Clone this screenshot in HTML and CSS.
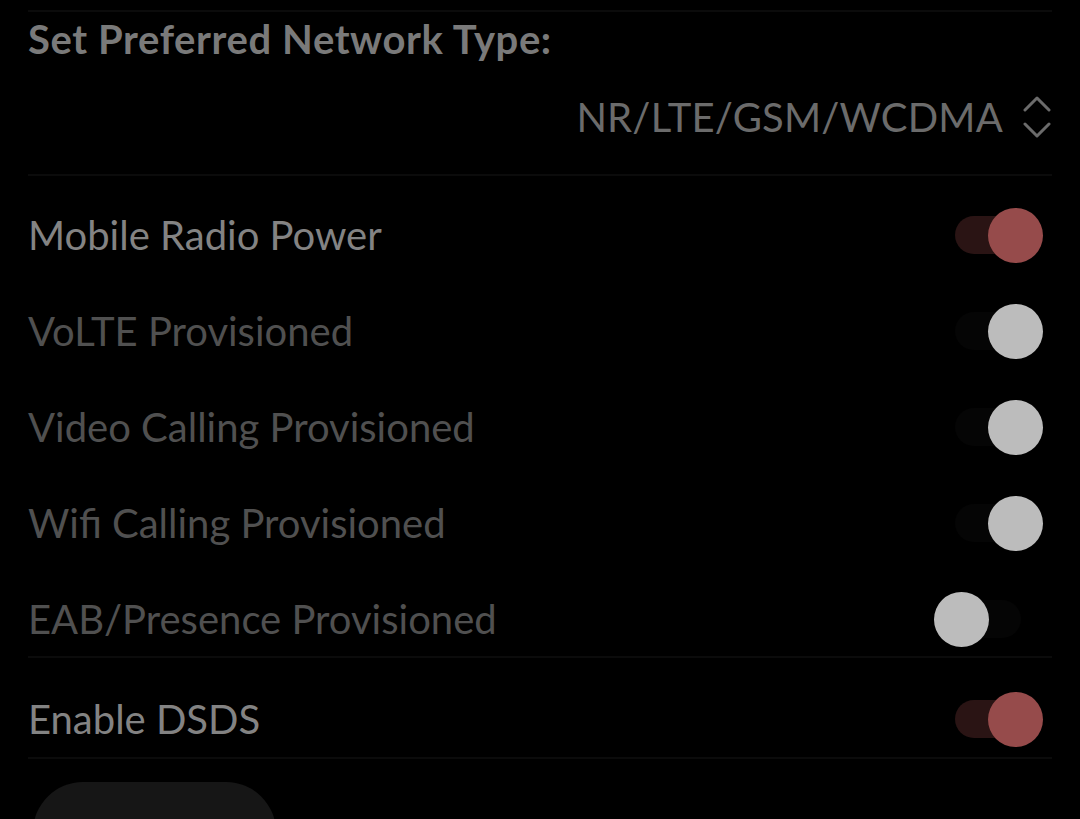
FILE: index.html
```html
<!DOCTYPE html>
<html lang="en">
<head>
<meta charset="UTF-8">
<title>Phone Info</title>
<link rel="stylesheet" href="styles.css">
</head>
<body>

<div class="page">
    <div class="divider top-divider"></div>

    <div class="network">
        <div class="network-label">Set Preferred Network Type:</div>
        <div class="network-select">
            <span class="network-value">NR/LTE/GSM/WCDMA</span>
            <svg class="chevrons" width="28" height="42" viewBox="0 0 28 42">
                <polyline points="2,14 14,2 26,14" />
                <polyline points="2,28 14,40 26,28" />
            </svg>
        </div>
    </div>

    <div class="divider"></div>

    <div class="group">
        <div class="row">
            <span class="row-label">Mobile Radio Power</span>
            <span class="switch on"><span class="thumb"></span></span>
        </div>
        <div class="row disabled">
            <span class="row-label">VoLTE Provisioned</span>
            <span class="switch on"><span class="thumb"></span></span>
        </div>
        <div class="row disabled">
            <span class="row-label">Video Calling Provisioned</span>
            <span class="switch on"><span class="thumb"></span></span>
        </div>
        <div class="row disabled">
            <span class="row-label">Wifi Calling Provisioned</span>
            <span class="switch on"><span class="thumb"></span></span>
        </div>
        <div class="row disabled">
            <span class="row-label">EAB/Presence Provisioned</span>
            <span class="switch"><span class="thumb"></span></span>
        </div>
    </div>

    <div class="divider"></div>

    <div class="group">
        <div class="row last">
            <span class="row-label">Enable DSDS</span>
            <span class="switch on"><span class="thumb"></span></span>
        </div>
    </div>

    <div class="divider"></div>

    <button class="action-btn"></button>
</div>

</body>
</html>
```

FILE: styles.css
```css
body {
    margin: 0;
    padding: 0;
    background: #000;
    font-family: Lato, Roboto, sans-serif;
    color: #838383;
}

.page {
    padding: 0 28px;
    height: 819px;
    overflow: hidden;
}

.divider {
    height: 2px;
    background: #0b0b0b;
}

.top-divider {
    margin-top: 10px;
}

.network {
    height: 162px;
    display: flex;
    flex-direction: column;
}

.network-label {
    font-size: 40px;
    font-weight: 700;
    letter-spacing: 0.6px;
    color: #7a7a7a;
    line-height: 44px;
    margin-top: 5px;
}

.network-select {
    display: flex;
    justify-content: flex-end;
    align-items: center;
    margin-top: 32px;
    gap: 20px;
}

.network-value {
    font-size: 40px;
    letter-spacing: 0.2px;
    color: #6b6b6b;
    line-height: 48px;
}

.chevrons {
    margin-right: 1px;
}

.chevrons polyline {
    fill: none;
    stroke: #6b6b6b;
    stroke-width: 3;
    stroke-linecap: round;
    stroke-linejoin: round;
}

.row {
    height: 96px;
    box-sizing: border-box;
    padding-top: 22px;
    display: flex;
    align-items: center;
    justify-content: space-between;
}

.row.last {
    height: 99px;
}

.row-label {
    font-size: 40px;
    line-height: 48px;
}

.row.disabled .row-label {
    color: #505050;
}

.switch {
    position: relative;
    width: 66px;
    height: 38px;
    border-radius: 19px;
    background: #050505;
    margin-right: 31px;
}

.switch.on {
    background: #2a1414;
}

.row.disabled .switch.on {
    background: #050505;
}

.thumb {
    position: absolute;
    top: -8px;
    left: -21px;
    width: 55px;
    height: 55px;
    border-radius: 50%;
    background: #bcbcbc;
}

.switch.on .thumb {
    left: 33px;
    background: #964b4b;
}

.row.disabled .switch.on .thumb {
    background: #bcbcbc;
}

.action-btn {
    display: block;
    margin: 23px 0 0 5px;
    width: 243px;
    height: 100px;
    border: none;
    border-radius: 50px;
    background: #161616;
}
```
